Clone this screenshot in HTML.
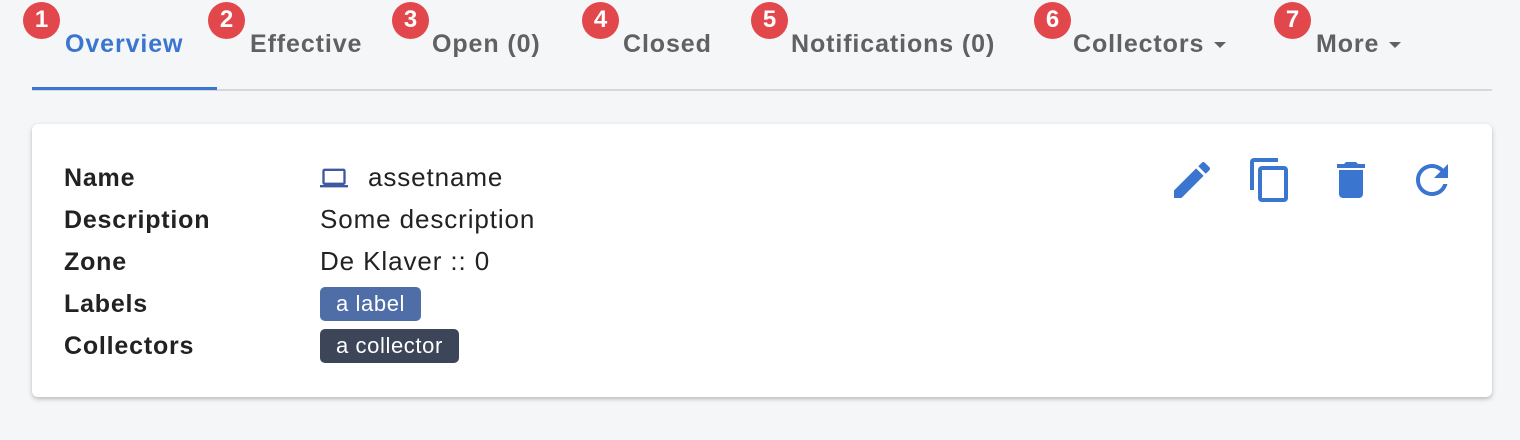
<!DOCTYPE html>
<html><head><style>
body{margin:0;width:1520px;height:440px;background:#f5f6f8;font-family:"Liberation Sans",Roboto,sans-serif;position:relative;overflow:hidden}
.tab{position:absolute;top:30px;font-size:25px;color:#5f6163;font-weight:bold;letter-spacing:0.9px;white-space:nowrap}
.b{position:absolute;top:2px;width:37px;height:37px;border-radius:50%;background:#e2474c;color:#fff;font-weight:bold;font-size:24px;text-align:center;line-height:36px}
.card{position:absolute;left:32px;top:124px;width:1460px;height:273px;background:#fff;border-radius:6px;box-shadow:0 2px 5px rgba(0,0,0,.25)}
.l{position:absolute;left:32px;font-weight:bold;font-size:25px;letter-spacing:0.8px;color:#222}
.v{position:absolute;left:288px;font-size:26px;letter-spacing:0.9px;color:#222}
.chip{position:absolute;left:288px;color:#fff;font-size:22px;letter-spacing:0.6px;padding:0 16px;height:34px;line-height:34px;border-radius:5px}
svg.i{position:absolute;top:32px;width:48px;height:48px;fill:#3a75cf}
.ar{display:inline-block;width:0;height:0;border-left:6px solid transparent;border-right:6px solid transparent;border-top:6px solid #5f6163;vertical-align:middle;margin-left:10px}
</style></head><body>
<div class="b" style="left:23px">1</div><div class="tab" style="left:65px;color:#3a75cf">Overview</div>
<div class="b" style="left:208px">2</div><div class="tab" style="left:250px">Effective</div>
<div class="b" style="left:392px">3</div><div class="tab" style="left:432px">Open (0)</div>
<div class="b" style="left:582px">4</div><div class="tab" style="left:623px">Closed</div>
<div class="b" style="left:751px">5</div><div class="tab" style="left:791px">Notifications (0)</div>
<div class="b" style="left:1034px">6</div><div class="tab" style="left:1073px">Collectors<span class="ar"></span></div>
<div class="b" style="left:1274px">7</div><div class="tab" style="left:1316px">More<span class="ar"></span></div>
<div style="position:absolute;left:32px;top:89px;width:1460px;height:2px;background:#d6d8dc"></div>
<div style="position:absolute;left:32px;top:87px;width:185px;height:3px;background:#3a75cf"></div>
<div class="card">
<div class="l" style="top:40px">Name</div>
<div class="l" style="top:82px">Description</div>
<div class="l" style="top:124px">Zone</div>
<div class="l" style="top:166px">Labels</div>
<div class="l" style="top:208px">Collectors</div>
<svg style="position:absolute;left:288px;top:40px;width:28px;height:28px;fill:#3f58a0" viewBox="0 0 24 24"><path d="M20 18c1.1 0 2-.9 2-2V6c0-1.1-.9-2-2-2H4c-1.1 0-2 .9-2 2v10c0 1.1.9 2 2 2H0v2h24v-2h-4zM4 6h16v10H4V6z"/></svg>
<div class="v" style="top:38px;left:336px">assetname</div>
<div class="v" style="top:80px">Some description</div>
<div class="v" style="top:122px">De Klaver :: 0</div>
<div class="chip" style="top:163px;background:#4f6ea8">a label</div>
<div class="chip" style="top:205px;background:#3d4658">a collector</div>
<svg class="i" style="left:1136px" viewBox="0 0 24 24"><path d="M3 17.25V21h3.75L17.81 9.94l-3.75-3.75L3 17.25zM20.71 7.04c.39-.39.39-1.02 0-1.41l-2.34-2.34c-.39-.39-1.02-.39-1.41 0l-1.83 1.83 3.75 3.75 1.83-1.83z"/></svg>
<svg class="i" style="left:1214px" viewBox="0 0 24 24"><path d="M16 1H4c-1.1 0-2 .9-2 2v14h2V3h12V1zm3 4H8c-1.1 0-2 .9-2 2v14c0 1.1.9 2 2 2h11c1.1 0 2-.9 2-2V7c0-1.1-.9-2-2-2zm0 16H8V7h11v14z"/></svg>
<svg class="i" style="left:1295px" viewBox="0 0 24 24"><path d="M6 19c0 1.1.9 2 2 2h8c1.1 0 2-.9 2-2V7H6v12zM19 4h-3.5l-1-1h-5l-1 1H5v2h14V4z"/></svg>
<svg class="i" style="left:1376px" viewBox="0 0 24 24"><path d="M17.65 6.35C16.2 4.9 14.21 4 12 4c-4.42 0-7.99 3.58-7.99 8s3.57 8 7.99 8c3.73 0 6.84-2.55 7.73-6h-2.08c-.82 2.33-3.04 4-5.65 4-3.31 0-6-2.69-6-6s2.69-6 6-6c1.66 0 3.14.69 4.22 1.78L13 11h7V4l-2.35 2.35z"/></svg>
</div>
</body></html>
